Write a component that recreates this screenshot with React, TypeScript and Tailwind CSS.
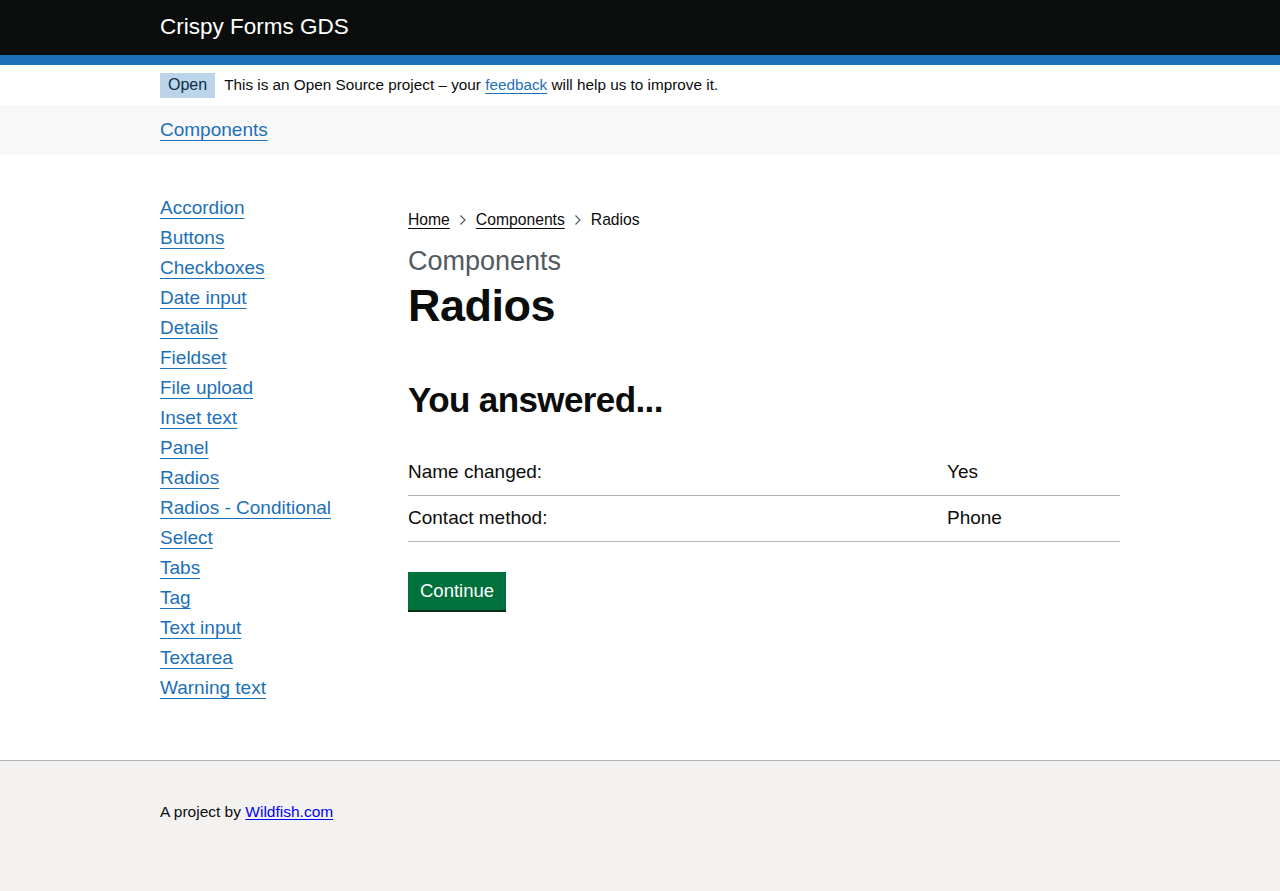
import React from "react";

const font = { fontFamily: '"Liberation Sans", Arial, sans-serif' };

const sideLinks = [
  "Accordion",
  "Buttons",
  "Checkboxes",
  "Date input",
  "Details",
  "Fieldset",
  "File upload",
  "Inset text",
  "Panel",
  "Radios",
  "Radios - Conditional",
  "Select",
  "Tabs",
  "Tag",
  "Text input",
  "Textarea",
  "Warning text",
];

function Chevron() {
  return (
    <svg width="8" height="12" viewBox="0 0 8 12" className="mx-[9px]" aria-hidden>
      <path d="M1.5 1.5 L6 6 L1.5 10.5" fill="none" stroke="#505a5f" strokeWidth="1.2" />
    </svg>
  );
}

export default function App() {
  return (
    <div className="min-h-[891px] flex flex-col bg-white text-[#0b0c0c]" style={font}>
      <header className="bg-[#0b0c0c] border-b-[10px] border-[#1d70b8]">
        <div className="w-[960px] mx-auto h-[55px] flex items-center">
          <span className="text-white text-[22.5px] leading-none">Crispy Forms GDS</span>
        </div>
      </header>

      <div className="h-[40px] bg-white">
        <div className="w-[960px] mx-auto h-full flex items-center">
          <span className="bg-[#bbd4ea] text-[#0c2d4a] text-[16px] h-[25px] px-[8px] flex items-center">Open</span>
          <span className="ml-[9px] text-[15.3px]">
            This is an Open Source project – your{" "}
            <a href="#" className="text-[#1d70b8] underline underline-offset-[3px]">feedback</a> will help us to improve it.
          </span>
        </div>
      </div>

      <div className="h-[50px] bg-[#f8f8f8]">
        <div className="w-[960px] mx-auto h-full flex items-center">
          <a href="#" className="text-[#1d70b8] text-[19px] underline underline-offset-[4px]">Components</a>
        </div>
      </div>

      <main className="flex-1 w-[960px] mx-auto flex pt-[37px] pb-[50px]">
        <nav className="w-[248px] shrink-0">
          <ul className="flex flex-col">
            {sideLinks.map((l) => (
              <li key={l} className="h-[30px] flex items-center">
                <a href="#" className="text-[#1d70b8] text-[19px] leading-none underline underline-offset-[4px]">{l}</a>
              </li>
            ))}
          </ul>
        </nav>

        <div className="flex-1 pt-[18px]">
          <div className="flex items-center text-[15.7px] h-[20px]">
            <a href="#" className="underline underline-offset-[3px]">Home</a>
            <Chevron />
            <a href="#" className="underline underline-offset-[3px]">Components</a>
            <Chevron />
            <span>Radios</span>
          </div>

          <div className="mt-[18px] text-[27px] leading-none text-[#505a5f]">Components</div>
          <h1 className="mt-[6px] text-[45px] font-bold leading-[50px] tracking-[-0.5px]">Radios</h1>

          <h2 className="mt-[51px] text-[35px] font-bold leading-none tracking-[-0.6px]">You answered...</h2>

          <div className="mt-[33px]">
            <div className="grid grid-cols-[539px_1fr] h-[46px] items-center border-b border-[#b1b4b6] text-[19px]">
              <span>Name changed:</span>
              <span>Yes</span>
            </div>
            <div className="grid grid-cols-[539px_1fr] h-[46px] items-center border-b border-[#b1b4b6] text-[19px]">
              <span>Contact method:</span>
              <span>Phone</span>
            </div>
          </div>

          <button className="mt-[30px] bg-[#00703c] text-white text-[18.5px] h-[38px] px-[12px] shadow-[0_2px_0_#002d18]">
            Continue
          </button>
        </div>
      </main>

      <footer className="h-[131px] bg-[#f3f2f1] border-t border-[#b1b4b6]">
        <div className="w-[960px] mx-auto pt-[39px] text-[15.5px]">
          A project by{" "}
          <a href="#" className="text-[#0000ee] underline underline-offset-[2px]">Wildfish.com</a>
        </div>
      </footer>
    </div>
  );
}
